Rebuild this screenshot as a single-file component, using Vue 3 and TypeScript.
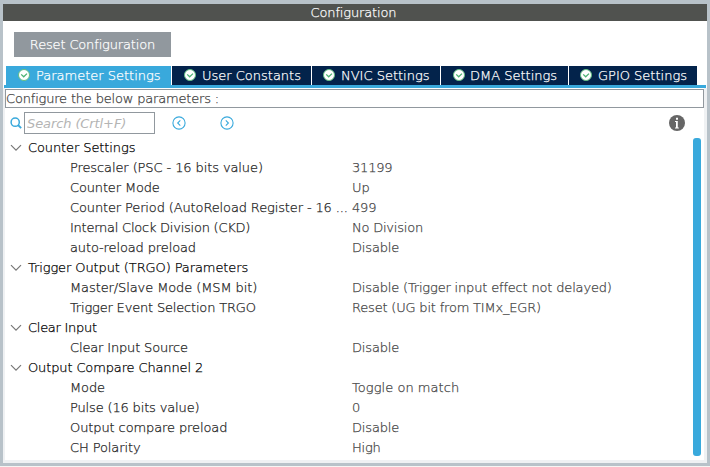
<script setup lang="ts">
interface Label { text: string; tracking: number }
interface Param { name: Label; value: Label }
interface Group { title: Label; params: Param[] }

const label = (text: string, tracking = -0.1): Label => ({ text, tracking })
const spacing = (l: Label) => ({ letterSpacing: `${l.tracking}px` })

const tabs: string[] = ['Parameter Settings', 'User Constants', 'NVIC Settings', 'DMA Settings', 'GPIO Settings']

const groups: Group[] = [
  {
    title: label('Counter Settings', -0.1),
    params: [
      { name: label('Prescaler (PSC - 16 bits value)'), value: label('31199', -0.2) },
      { name: label('Counter Mode', -0.15), value: label('Up') },
      { name: label('Counter Period (AutoReload Register - 16 ...', -0.13), value: label('499', -0.2) },
      { name: label('Internal Clock Division (CKD)', -0.24), value: label('No Division', -0.22) },
      { name: label('auto-reload preload', -0.12), value: label('Disable', -0.15) },
    ],
  },
  {
    title: label('Trigger Output (TRGO) Parameters', -0.1),
    params: [
      { name: label('Master/Slave Mode (MSM bit)', -0.1), value: label('Disable (Trigger input effect not delayed)', -0.17) },
      { name: label('Trigger Event Selection TRGO', -0.18), value: label('Reset (UG bit from TIMx_EGR)', -0.19) },
    ],
  },
  { title: label('Clear Input', -0.28), params: [{ name: label('Clear Input Source', -0.15), value: label('Disable', -0.15) }] },
  {
    title: label('Output Compare Channel 2', -0.13),
    params: [
      { name: label('Mode'), value: label('Toggle on match', 0.05) },
      { name: label('Pulse (16 bits value)', -0.15), value: label('0') },
      { name: label('Output compare preload', -0.1), value: label('Disable', -0.15) },
      { name: label('CH Polarity', -0.1), value: label('High', -0.2) },
    ],
  },
]
</script>

<template>
  <div class="window">
    <header class="title">Configuration</header>
    <div class="toolbar"><button class="reset">Reset Configuration</button></div>
    <nav class="tabs">
      <div v-for="(tab, i) in tabs" :key="tab" class="tab" :class="{ active: i === 0 }">
        <svg class="check" viewBox="0 0 12 12">
          <circle cx="6" cy="6" r="5.5" fill="#fff" stroke="#62bd83" stroke-width="1" />
          <path d="M3.2 5.4 5.7 7.8 9 4.6" fill="none" stroke="#4db374" stroke-width="1.3" />
        </svg>
        <span>{{ tab }}</span>
      </div>
    </nav>
    <div class="rule"></div>
    <main class="panel">
      <div class="hint">Configure the below parameters :</div>
      <div class="searchbar">
        <svg class="magnifier" viewBox="0 0 12 12">
          <circle cx="5.2" cy="5.2" r="4.1" fill="none" stroke="#39a9dc" stroke-width="1.5" />
          <path d="M8 8 11.2 11.2" stroke="#39a9dc" stroke-width="1.8" />
        </svg>
        <input class="search" placeholder="Search (Crtl+F)" />
        <svg class="step prev" viewBox="0 0 14 14">
          <circle cx="7" cy="7" r="6.1" />
          <path d="M8.3 4.4 5.7 7 8.3 9.6" />
        </svg>
        <svg class="step" viewBox="0 0 14 14">
          <circle cx="7" cy="7" r="6.1" />
          <path d="M5.8 4.4 8.4 7 5.8 9.6" />
        </svg>
        <svg class="info" viewBox="0 0 16 16">
          <circle cx="8" cy="8" r="8" fill="#666" />
          <path d="M7 2.8h2v1.9H7zM6 6h2.8v6.5h1v1H6v-1h1V7H6z" fill="#fff" />
        </svg>
      </div>
      <div class="body">
        <div class="tree">
          <section v-for="g in groups" :key="g.title.text">
            <div class="row group">
              <svg class="chevron" viewBox="0 0 12 8"><path d="M1 1.2 6 6.2 11 1.2" /></svg>
              <span :style="spacing(g.title)">{{ g.title.text }}</span>
            </div>
            <div v-for="p in g.params" :key="p.name.text" class="row param">
              <span class="name" :style="spacing(p.name)">{{ p.name.text }}</span>
              <span class="value" :style="spacing(p.value)">{{ p.value.text }}</span>
            </div>
          </section>
        </div>
        <div class="track"><div class="thumb"></div></div>
      </div>
    </main>
  </div>
</template>

<style>
body { margin: 0; background: #f7f5f3; overflow: hidden; }
</style>

<style scoped>
.window {
  box-sizing: border-box;
  width: 710px;
  height: 466px;
  border: solid #b8c2c9;
  border-width: 4px 3px 3px;
  background: #fff;
  display: flex;
  flex-direction: column;
  font: 200 13px/20px "DejaVu Sans", "DejaVu Sans Light", sans-serif;
  -webkit-text-stroke: 0.25px currentColor;
}
.title { height: 17px; line-height: 17px; background: #50524f; color: #fff; text-align: center; padding-right: 3px; letter-spacing: -0.15px; }
.toolbar { height: 45px; padding: 11px 0 0 11px; box-sizing: border-box; }
.reset { display: block; width: 157px; height: 25px; border: 0; padding: 0; background: #91989e; color: #fff; font: inherit; letter-spacing: -0.15px; }
.tabs { height: 19px; display: grid; grid-template-columns: 165px 139px 128px 127px 128px; gap: 1px; padding-left: 3px; }
.tab { display: flex; align-items: center; background: #03234b; color: #fff; white-space: nowrap; padding-left: 12px; gap: 6px; line-height: 19px; letter-spacing: 0; }
.tab.active { background: #39a9dc; }
.check { width: 12px; height: 12px; flex: none; margin-top: -1px; }
.tab:nth-child(n + 3) { padding-left: 11px; }
.tab:nth-child(4) { padding-left: 12px; gap: 5px; }
.rule { height: 3px; margin: 0 1px; background: #39a9dc; flex: none; }
.panel { flex: 1; min-height: 0; border: solid #eff1f3; border-width: 0 3px 3px 2px; padding-top: 1px; display: flex; flex-direction: column; }
.hint { height: 19px; box-sizing: border-box; border: 1px solid #91989e; color: #404040; line-height: 17px; flex: none; letter-spacing: -0.18px; }
.searchbar { display: flex; align-items: center; height: 30px; padding: 0 19px 0 5px; flex: none; }
.magnifier { width: 12px; height: 12px; margin-right: 2px; }
.search { box-sizing: border-box; width: 131px; height: 22px; border: 1px solid #91989e; padding: 0 2px; font: italic 200 13px "DejaVu Sans", "DejaVu Sans Light", sans-serif; letter-spacing: -0.1px; outline: 0; }
.search::placeholder { color: #b4b4b4; opacity: 1; -webkit-text-stroke: 0; }
.step { width: 14px; height: 14px; margin-left: 34px; fill: none; stroke: #39a9dc; stroke-width: 1.1; }
.prev { margin-left: 17px; }
.info { width: 16px; height: 16px; margin-left: auto; }
.body { flex: 1; min-height: 0; display: flex; }
.tree { flex: 1; min-width: 0; }
.row { height: 20px; display: flex; align-items: center; white-space: nowrap; }
.group { color: #000; padding-left: 5px; }
.chevron { width: 12px; height: 8px; margin-right: 6px; fill: none; stroke: #777; stroke-width: 1.2; }
.param { padding-left: 65px; color: #222; }
.name { width: 282px; flex: none; }
.value { color: #444; }
.track { width: 11px; }
.thumb { width: 8px; height: 318px; border-radius: 3px; background: #39a9dc; }
</style>
